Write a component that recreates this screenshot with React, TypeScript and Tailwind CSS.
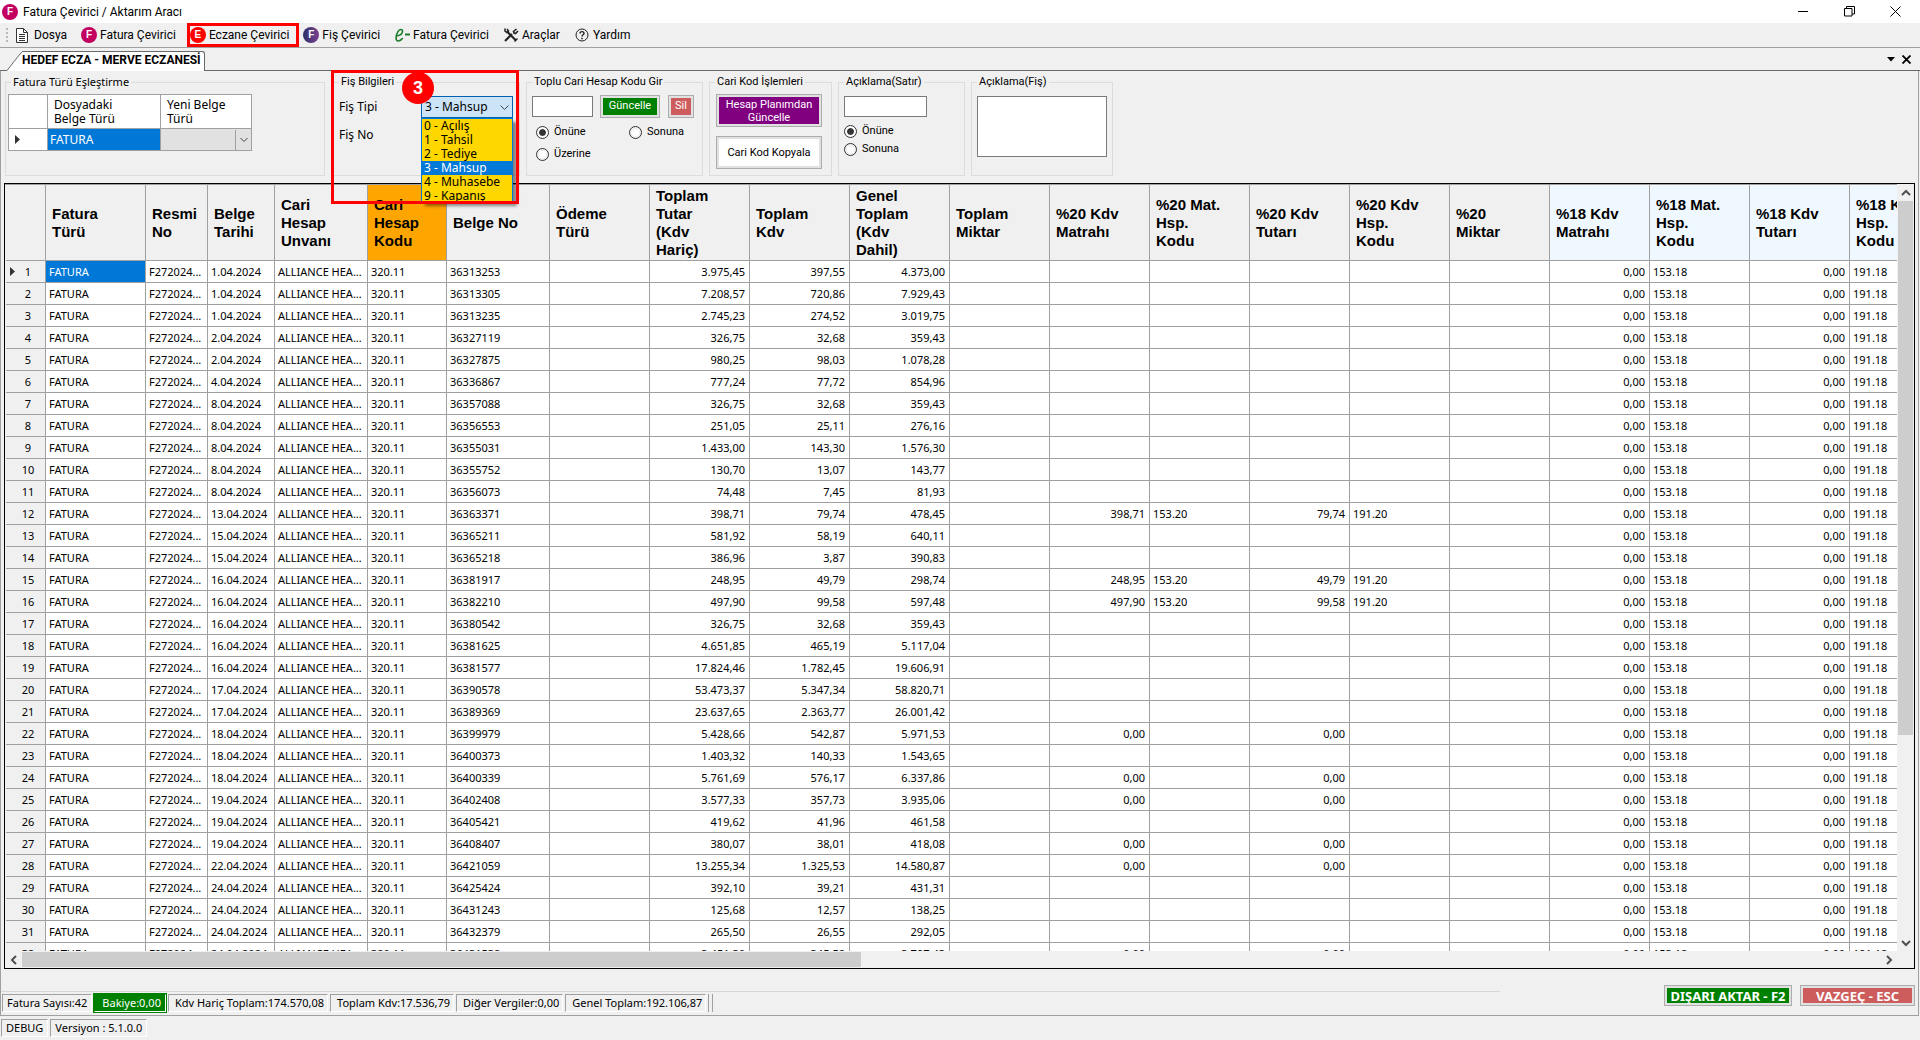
import { useState } from 'react';
import type { ReactNode } from 'react';
import { clsx } from 'clsx';

type Column = {
  lines: string[];
  width: string;
  align?: 'right';
  tone?: 'orange' | 'blue';
};

const columns: Column[] = [
  { lines: ['Fatura', 'Türü'], width: 'w-[100px]' },
  { lines: ['Resmi', 'No'], width: 'w-[62px]' },
  { lines: ['Belge', 'Tarihi'], width: 'w-[67px]' },
  { lines: ['Cari', 'Hesap', 'Unvanı'], width: 'w-[93px]' },
  { lines: ['Cari', 'Hesap', 'Kodu'], width: 'w-[79px]', tone: 'orange' },
  { lines: ['Belge No'], width: 'w-[103px]' },
  { lines: ['Ödeme', 'Türü'], width: 'w-[100px]' },
  { lines: ['Toplam', 'Tutar', '(Kdv', 'Hariç)'], width: 'w-[100px]', align: 'right' },
  { lines: ['Toplam', 'Kdv'], width: 'w-[100px]', align: 'right' },
  { lines: ['Genel', 'Toplam', '(Kdv', 'Dahil)'], width: 'w-[100px]', align: 'right' },
  { lines: ['Toplam', 'Miktar'], width: 'w-[100px]', align: 'right' },
  { lines: ['%20 Kdv', 'Matrahı'], width: 'w-[100px]', align: 'right' },
  { lines: ['%20 Mat.', 'Hsp.', 'Kodu'], width: 'w-[100px]' },
  { lines: ['%20 Kdv', 'Tutarı'], width: 'w-[100px]', align: 'right' },
  { lines: ['%20 Kdv', 'Hsp.', 'Kodu'], width: 'w-[100px]' },
  { lines: ['%20', 'Miktar'], width: 'w-[100px]', align: 'right' },
  { lines: ['%18 Kdv', 'Matrahı'], width: 'w-[100px]', align: 'right', tone: 'blue' },
  { lines: ['%18 Mat.', 'Hsp.', 'Kodu'], width: 'w-[100px]', tone: 'blue' },
  { lines: ['%18 Kdv', 'Tutarı'], width: 'w-[100px]', align: 'right', tone: 'blue' },
  { lines: ['%18 Kdv', 'Hsp.', 'Kodu'], width: 'w-[100px]', tone: 'blue' },
];

// date, document no, net total, vat total, grand total, %20 base, %20 vat
const invoices: string[][] = [
  ['1.04.2024', '36313253', '3.975,45', '397,55', '4.373,00'],
  ['1.04.2024', '36313305', '7.208,57', '720,86', '7.929,43'],
  ['1.04.2024', '36313235', '2.745,23', '274,52', '3.019,75'],
  ['2.04.2024', '36327119', '326,75', '32,68', '359,43'],
  ['2.04.2024', '36327875', '980,25', '98,03', '1.078,28'],
  ['4.04.2024', '36336867', '777,24', '77,72', '854,96'],
  ['8.04.2024', '36357088', '326,75', '32,68', '359,43'],
  ['8.04.2024', '36356553', '251,05', '25,11', '276,16'],
  ['8.04.2024', '36355031', '1.433,00', '143,30', '1.576,30'],
  ['8.04.2024', '36355752', '130,70', '13,07', '143,77'],
  ['8.04.2024', '36356073', '74,48', '7,45', '81,93'],
  ['13.04.2024', '36363371', '398,71', '79,74', '478,45', '398,71', '79,74'],
  ['15.04.2024', '36365211', '581,92', '58,19', '640,11'],
  ['15.04.2024', '36365218', '386,96', '3,87', '390,83'],
  ['16.04.2024', '36381917', '248,95', '49,79', '298,74', '248,95', '49,79'],
  ['16.04.2024', '36382210', '497,90', '99,58', '597,48', '497,90', '99,58'],
  ['16.04.2024', '36380542', '326,75', '32,68', '359,43'],
  ['16.04.2024', '36381625', '4.651,85', '465,19', '5.117,04'],
  ['16.04.2024', '36381577', '17.824,46', '1.782,45', '19.606,91'],
  ['17.04.2024', '36390578', '53.473,37', '5.347,34', '58.820,71'],
  ['17.04.2024', '36389369', '23.637,65', '2.363,77', '26.001,42'],
  ['18.04.2024', '36399979', '5.428,66', '542,87', '5.971,53', '0,00', '0,00'],
  ['18.04.2024', '36400373', '1.403,32', '140,33', '1.543,65'],
  ['18.04.2024', '36400339', '5.761,69', '576,17', '6.337,86', '0,00', '0,00'],
  ['19.04.2024', '36402408', '3.577,33', '357,73', '3.935,06', '0,00', '0,00'],
  ['19.04.2024', '36405421', '419,62', '41,96', '461,58'],
  ['19.04.2024', '36408407', '380,07', '38,01', '418,08', '0,00', '0,00'],
  ['22.04.2024', '36421059', '13.255,34', '1.325,53', '14.580,87', '0,00', '0,00'],
  ['24.04.2024', '36425424', '392,10', '39,21', '431,31'],
  ['24.04.2024', '36431243', '125,68', '12,57', '138,25'],
  ['24.04.2024', '36432379', '265,50', '26,55', '292,05'],
  ['24.04.2024', '36431538', '3.451,30', '345,52', '3.797,43', '0,00', '0,00'],
];

function toCells([date, no, net, vat, total, base20 = '', vat20 = '']: string[]) {
  const has20 = base20 !== '' && base20 !== '0,00';
  return [
    'FATURA', 'F272024...', date, 'ALLIANCE HEA...', '320.11', no, '',
    net, vat, total, '',
    base20, has20 ? '153.20' : '', vat20, has20 ? '191.20' : '', '',
    '0,00', '153.18', '0,00', '191.18',
  ];
}

const receiptTypes = ['0 - Açılış', '1 - Tahsil', '2 - Tediye', '3 - Mahsup', '4 - Muhasebe', '9 - Kapanış'];

function LetterIcon({ letter, color }: { letter: string; color: string }) {
  return (
    <span
      className={clsx(
        'flex size-4 shrink-0 items-center justify-center rounded-full font-["Liberation_Sans",sans-serif] text-[10px] font-bold leading-none text-white',
        color
      )}
    >
      {letter}
    </span>
  );
}

function FileIcon() {
  return (
    <svg className="size-4 shrink-0" viewBox="0 0 16 16" fill="none" stroke="#333">
      <path d="M1.500 1.500h7l4 4v10h-11z" fill="#fff" />
      <path d="M8.500 1.500v4h4M4 7.500h6M4 9.500h6M4 11.500h6M4 13.500h6" />
    </svg>
  );
}

function EInvoiceIcon() {
  return (
    <svg className="size-4 shrink-0" viewBox="0 0 16 16" fill="none" stroke="#1c7c2c" strokeWidth="1.600" strokeLinecap="round">
      <path d="M2.500 9C6 8.500 8.500 6.500 8.500 4.300 8.500 1.800 5.500 1.800 3.800 4.800 1.500 9 1.300 14 4.300 14c1.500 0 3-1 4-2.500" />
      <path d="M11 7.500h5" strokeWidth="2" strokeLinecap="butt" />
    </svg>
  );
}

function ToolsIcon() {
  return (
    <svg className="size-4 shrink-0" viewBox="0 0 16 16" fill="none" stroke="#222">
      <path d="M4.500 5l8.500 8.500" strokeWidth="2.200" />
      <path d="M2 1.500v2.500l2 1.500 1.500-1.500L4 2" strokeWidth="1.500" />
      <path d="M2 14l7-7" strokeWidth="2.200" />
      <path d="M13.500 2l-3 2.500.5 1.500 1.500.5 2.500-2.500" strokeWidth="1.600" />
      <path d="M11.500 14.500l3-3" strokeWidth="1.500" />
    </svg>
  );
}

function HelpIcon() {
  return (
    <svg className="size-4 shrink-0" viewBox="0 0 16 16" fill="none" stroke="#222">
      <circle cx="8" cy="8" r="6" />
      <path d="M6 6.500c0-2.500 4-2.500 4 0 0 1.300-2 1.300-2 3" strokeWidth="1.400" />
      <path d="M8 10.700v1.500" strokeWidth="1.500" />
    </svg>
  );
}

function MenuItem({ icon, children }: { icon: ReactNode; children: ReactNode }) {
  return (
    <button type="button" className="flex items-center gap-[3px]">
      {icon}
      {children}
    </button>
  );
}

function Group({ title, className, children }: { title: string; className: string; children: ReactNode }) {
  return (
    <fieldset className={clsx('h-[102px] shrink-0 border border-[#dcdcdc]', className)}>
      <legend className="ml-[5px] px-[2px] leading-4">{title}</legend>
      {children}
    </fieldset>
  );
}

function PushButton({ className, children }: { className: string; children: ReactNode }) {
  return (
    <button type="button" className="flex border border-[#adadad] bg-[#e1e1e1] p-[2px]">
      <span className={clsx('flex flex-1 items-center justify-center self-stretch text-center', className)}>{children}</span>
    </button>
  );
}

function RadioOption({ name, label, defaultChecked }: { name: string; label: string; defaultChecked?: boolean }) {
  return (
    <label className="flex items-center gap-[5px] leading-4">
      <input
        type="radio"
        name={name}
        defaultChecked={defaultChecked}
        className="size-[13px] appearance-none rounded-full border border-[#333] bg-white bg-clip-content p-[2px] checked:bg-[#333] checked:shadow-[inset_0_0_0_2px_#fff]"
      />
      {label}
    </label>
  );
}

function StatusItem({ children, className }: { children: ReactNode; className: string }) {
  return (
    <span className={clsx('border border-r-white border-b-white leading-4', className)}>
      {children}
    </span>
  );
}

function Chevron({ path }: { path: string }) {
  return (
    <svg className="size-[10px]" viewBox="0 0 10 10" fill="none" stroke="#505050" strokeWidth="2">
      <path d={path} />
    </svg>
  );
}

function MatchTable() {
  return (
    <table className="ml-[2px] mt-1 w-[244px] table-fixed border-collapse border border-[#a0a0a0] bg-white text-[12px] leading-[14px]">
      <thead>
        <tr className="h-[34px] text-left">
          <th aria-label="Seçim" className="w-[39px] border border-[#a0a0a0]" />
          <th className="w-[113px] border border-[#a0a0a0] pl-[6px] font-normal">Dosyadaki<br />Belge Türü</th>
          <th className="border border-[#a0a0a0] pl-[6px] font-normal">Yeni Belge<br />Türü</th>
        </tr>
      </thead>
      <tbody>
        <tr className="h-[22px]">
          <td className="border border-[#a0a0a0] pl-[6px]">
            <svg className="h-[9px] w-[5px]" viewBox="0 0 5 9"><path d="M0 0l5 4.500-5 4.500z" fill="#333" /></svg>
          </td>
          <td className="border border-[#a0a0a0] bg-[#0078d7] pl-[2px] text-white">FATURA</td>
          <td className="border border-[#a0a0a0] bg-[#e1e1e1] p-0">
            <div className="relative">
              <select aria-label="Yeni Belge Türü" className="block h-5 w-full appearance-none bg-transparent">
                <option></option>
              </select>
              <span className="pointer-events-none absolute inset-y-0 right-0 flex w-4 items-center justify-center border-l border-[#a0a0a0]">
                <svg className="size-2" viewBox="0 0 8 8" fill="none" stroke="#444"><path d="M.5 2L4 5.500 7.500 2" /></svg>
              </span>
            </div>
          </td>
        </tr>
      </tbody>
    </table>
  );
}

function ReceiptTypeSelect() {
  const [type, setType] = useState('3 - Mahsup');

  return (
    <div className="relative w-[92px]">
      <select
        id="receipt-type"
        value={type}
        onChange={(e) => setType(e.target.value)}
        className="block h-[22px] w-full appearance-none border border-[#0063b1] bg-[#cce4f7] pl-[3px] text-[12px]"
      >
        {receiptTypes.map((t) => <option key={t}>{t}</option>)}
      </select>
      <svg className="pointer-events-none absolute right-1 top-[7px] size-[9px]" viewBox="0 0 9 9" fill="none" stroke="#444">
        <path d="M.5 2.500l4 4 4-4" />
      </svg>
      {/* Open list */}
      <ul role="listbox" aria-label="Fiş Tipi" className="absolute left-0 top-[22px] z-20 h-[84px] w-full overflow-hidden border border-b-0 border-[#0078d7] bg-[#ffd700] text-[12px] leading-[14px] shadow-[4px_4px_3px_rgba(0,0,0,0.45)]">
        {receiptTypes.map((t) => (
          <li
            key={t}
            role="option"
            aria-selected={t === type}
            onClick={() => setType(t)}
            className={clsx('pl-[2px]', t === type && 'bg-[#0078d7] text-white')}
          >
            {t}
          </li>
        ))}
      </ul>
    </div>
  );
}

function InvoiceGrid() {
  return (
    <div className="mx-[3px] mt-[7px] grid min-h-0 flex-1 grid-cols-[minmax(0,1fr)_17px] grid-rows-[minmax(0,1fr)_17px] border border-black">
      <div className="overflow-hidden border-t border-[#a0a0a0] bg-[#f0f0f0] pl-px">
        <table className="w-[1944px] table-fixed border-separate border-spacing-0 bg-white text-[11px]">
          <thead>
            <tr className="h-[76px] text-left font-['Liberation_Sans',sans-serif] text-[15px] leading-[18px]">
              <th aria-label="Sıra" className="w-[40px] border-b border-r border-[#a0a0a0] bg-[#f0f0f0]" />
              {columns.map((col, i) => (
                <th
                  key={i}
                  className={clsx(
                    'border-b border-r border-[#a0a0a0] pl-[6px] font-bold',
                    col.width,
                    col.tone === 'orange' && 'bg-[#ffa500]',
                    col.tone === 'blue' && 'bg-[#f0f8ff]',
                    !col.tone && 'bg-[#f0f0f0]'
                  )}
                >
                  {col.lines.map((line) => <span key={line} className="block whitespace-nowrap">{line}</span>)}
                </th>
              ))}
            </tr>
          </thead>
          <tbody>
            {invoices.map((invoice, r) => (
              <tr key={r} className="h-[22px] leading-4">
                <th className="border-b border-r border-[#a0a0a0] bg-[#f0f0f0] font-normal">
                  <span className="flex items-center pl-1">
                    <span className="w-[5px]">
                      {r === 0 && <svg className="h-[9px] w-[5px]" viewBox="0 0 5 9"><path d="M0 0l5 4.500-5 4.500z" fill="#333" /></svg>}
                    </span>
                    <span className="w-[26px] text-center">{r + 1}</span>
                  </span>
                </th>
                {toCells(invoice).map((cell, c) => (
                  <td
                    key={c}
                    className={clsx(
                      'whitespace-nowrap border-b border-r border-[#a0a0a0]',
                      columns[c].align === 'right' ? 'pr-1 text-right' : 'pl-[3px]',
                      r === 0 && c === 0 && 'bg-[#0078d7] text-white'
                    )}
                  >
                    {cell}
                  </td>
                ))}
              </tr>
            ))}
          </tbody>
        </table>
      </div>

      {/* Vertical scrollbar */}
      <div className="flex flex-col items-center bg-[#f0f0f0]">
        <span className="flex h-[17px] items-center"><Chevron path="M1 7l4-4 4 4" /></span>
        <span className="h-[534px] w-[15px] bg-[#cdcdcd]" />
        <span className="mt-auto flex h-[17px] items-center"><Chevron path="M1 3l4 4 4-4" /></span>
      </div>

      {/* Horizontal scrollbar */}
      <div className="flex items-center bg-[#f0f0f0]">
        <span className="flex w-[17px] justify-center"><Chevron path="M7 1L3 5l4 4" /></span>
        <span className="h-[15px] w-[839px] bg-[#cdcdcd]" />
        <span className="ml-auto flex w-[17px] justify-center"><Chevron path="M3 1l4 4-4 4" /></span>
      </div>
      <div className="bg-[#f0f0f0]" />
    </div>
  );
}

export default function App() {
  return (
    <div className="relative flex h-screen flex-col overflow-hidden bg-[#f0f0f0] font-['Noto_Sans',sans-serif] text-[11px] text-black">
      {/* Title bar */}
      <header className="flex h-[23px] shrink-0 items-center bg-white pl-[2px] font-['Roboto',sans-serif] text-[12px]">
        <LetterIcon letter="F" color="bg-[#c2005f]" />
        <h1 className="ml-[5px]">Fatura Çevirici / Aktarım Aracı</h1>
        <div className="ml-auto flex items-center gap-[35px] pr-[19px]">
          <button type="button" aria-label="Simge durumuna küçült">
            <svg className="size-[11px]" viewBox="0 0 11 11" stroke="#000"><path d="M0 5.500h10" /></svg>
          </button>
          <button type="button" aria-label="Önceki boyut">
            <svg className="size-[11px]" viewBox="0 0 11 11" fill="none" stroke="#000"><path d="M.5 2.500h7.500v7.500H.5zM2.500 2.500v-2h8v7.500h-2.500" /></svg>
          </button>
          <button type="button" aria-label="Kapat">
            <svg className="size-[11px]" viewBox="0 0 11 11" stroke="#000"><path d="M.5 .5l10 10M10.500 .5l-10 10" /></svg>
          </button>
        </div>
      </header>

      {/* Menu */}
      <nav className="flex h-6 shrink-0 items-center gap-[14px] pl-[6px] font-['Roboto',sans-serif] text-[12px]">
        <div className="flex items-center gap-[7px]">
          <span className="h-[14px] border-l-2 border-dotted border-[#b8b8b8]" />
          <MenuItem icon={<FileIcon />}>Dosya</MenuItem>
        </div>
        <MenuItem icon={<LetterIcon letter="F" color="bg-[#c2005f]" />}>Fatura Çevirici</MenuItem>
        <div className="-ml-[3px] flex h-6 items-center border-[3px] border-[#fe0000] pr-[7px]">
          <MenuItem icon={<LetterIcon letter="E" color="bg-[#fe0000]" />}>Eczane Çevirici</MenuItem>
        </div>
        <div className="-ml-[10px]">
          <MenuItem icon={<LetterIcon letter="F" color="bg-linear-to-r from-[#2b2f66] to-[#7d3f92]" />}>Fiş Çevirici</MenuItem>
        </div>
        <MenuItem icon={<EInvoiceIcon />}>Fatura Çevirici</MenuItem>
        <MenuItem icon={<ToolsIcon />}>Araçlar</MenuItem>
        <MenuItem icon={<HelpIcon />}>Yardım</MenuItem>
      </nav>

      {/* Document tabs */}
      <div className="flex h-6 shrink-0 items-end border-b border-t border-b-[#696969] border-t-[#a0a0a0] pl-[7px]">
        <div className="-mb-px flex h-5">
          <svg className="h-5 w-[18px]" viewBox="0 0 18 20"><path d="M0 19.500L13 3Q15 .5 18 .5V20H0z" fill="#fff" /><path d="M0 19.500L13 3Q15 .5 18 .5" fill="none" stroke="#696969" /></svg>
          <button type="button" className="-ml-[3px] rounded-tr-[3px] border-r border-t border-[#696969] bg-white pb-[3px] pr-[3px] font-['Roboto',sans-serif] text-[12px] font-bold leading-4">
            HEDEF ECZA - MERVE ECZANESİ
          </button>
        </div>
        <div className="ml-auto flex items-center gap-[7px] self-center pr-[9px]">
          <button type="button" aria-label="Sekmeler">
            <svg className="h-[5px] w-2" viewBox="0 0 8 5"><path d="M0 0h8L4 4.500z" /></svg>
          </button>
          <button type="button" aria-label="Sekmeyi kapat">
            <svg className="size-[9px]" viewBox="0 0 9 9" stroke="#000" strokeWidth="1.800"><path d="M.5 .5l8 8M8.500 .5l-8 8" /></svg>
          </button>
        </div>
      </div>

      <main className="mr-px flex min-h-0 flex-1 flex-col border-x border-b border-[#a0a0a0]">
        {/* Option groups */}
        <div className="flex shrink-0 gap-[6px] pl-1 pt-[3px] font-['Roboto',sans-serif]">
          <Group title="Fatura Türü Eşleştirme" className="mr-[2px] w-[320px] font-['Noto_Sans',sans-serif]">
            <MatchTable />
          </Group>

          <Group title="Fiş Bilgileri" className="w-[187px]">
            <div className="mt-[6px] flex items-center justify-between pl-[5px] pr-[6px] font-['Noto_Sans',sans-serif] text-[12px]">
              <label htmlFor="receipt-type">Fiş Tipi</label>
              <ReceiptTypeSelect />
            </div>
            <p className="mt-[9px] pl-[5px] font-['Noto_Sans',sans-serif] text-[12px] leading-4">Fiş No</p>
          </Group>

          <Group title="Toplu Cari Hesap Kodu Gir" className="w-[177px]">
            <div className="mt-[5px] flex items-center pl-[5px]">
              <input type="text" aria-label="Cari Hesap Kodu" className="h-[21px] w-[61px] border border-[#7a7a7a] bg-white px-1" />
              <div className="ml-[7px] flex h-[23px] w-[60px] *:flex-1">
                <PushButton className="bg-[#008000] text-white">Güncelle</PushButton>
              </div>
              <div className="ml-2 flex h-[23px] w-[26px] *:flex-1">
                <PushButton className="bg-[#cd5c5c] text-white">Sil</PushButton>
              </div>
            </div>
            <div className="mt-[6px] grid grid-cols-[93px_1fr] gap-y-[6px] pl-[9px]">
              <RadioOption name="bulk-code" label="Önüne" defaultChecked />
              <RadioOption name="bulk-code" label="Sonuna" />
              <RadioOption name="bulk-code" label="Üzerine" />
            </div>
          </Group>

          <Group title="Cari Kod İşlemleri" className="w-[123px]">
            <div className="ml-[6px] mt-1 flex w-[106px] flex-col gap-[9px] leading-[13px] *:h-[33px]">
              <PushButton className="bg-[#800080] text-white">Hesap Planımdan<br />Güncelle</PushButton>
              <PushButton className="bg-white">Cari Kod Kopyala</PushButton>
            </div>
          </Group>

          <Group title="Açıklama(Satır)" className="w-[127px]">
            <div className="flex flex-col items-start gap-[2px] pl-[5px] pt-[6px]">
              <input type="text" aria-label="Açıklama (Satır)" className="mb-1 h-[21px] w-[83px] border border-[#7a7a7a] bg-white px-1" />
              <RadioOption name="row-note" label="Önüne" defaultChecked />
              <RadioOption name="row-note" label="Sonuna" />
            </div>
          </Group>

          <Group title="Açıklama(Fiş)" className="w-[142px]">
            <textarea aria-label="Açıklama (Fiş)" className="ml-[5px] mt-[6px] block h-[61px] w-[130px] resize-none border border-[#7a7a7a] bg-white p-1" />
          </Group>
        </div>

        <InvoiceGrid />

        {/* Totals and actions */}
        <footer className="flex h-[46px] shrink-0 justify-between">
          <div className="mt-[22px] flex w-[1499px] items-start gap-[2px] border-t border-[#d7d7d7] pl-px pt-[2px]">
            <StatusItem className="border-[#a0a0a0] px-1">Fatura Sayısı:42</StatusItem>
            <StatusItem className="border-[#008000] bg-[#008000] pl-[7px] pr-1 text-white outline outline-[#008000]">Bakiye:0,00</StatusItem>
            <StatusItem className="border-[#a0a0a0] pl-[6px] pr-[3px]">Kdv Hariç Toplam:174.570,08</StatusItem>
            <StatusItem className="border-[#a0a0a0] pl-[6px] pr-[3px]">Toplam Kdv:17.536,79</StatusItem>
            <StatusItem className="border-[#a0a0a0] pl-[6px] pr-[3px]">Diğer Vergiler:0,00</StatusItem>
            <StatusItem className="border-[#a0a0a0] pl-[6px] pr-[3px]">Genel Toplam:192.106,87</StatusItem>
            <span className="h-[18px] w-[5px] border-x border-[#a0a0a0]" />
          </div>
          <div className="mr-[3px] mt-4 flex gap-2 text-[13px] font-bold leading-4">
            <div className="flex h-[21px] w-[128px] *:flex-1">
              <PushButton className="bg-[#008000] text-white">DIŞARI AKTAR - F2</PushButton>
            </div>
            <div className="flex h-[21px] w-[115px] *:flex-1">
              <PushButton className="bg-[#cd5c5c] text-white">VAZGEÇ - ESC</PushButton>
            </div>
          </div>
        </footer>
      </main>

      <div className="flex h-6 shrink-0 items-center gap-[2px] pl-px">
        <StatusItem className="border-[#a0a0a0] px-1">DEBUG</StatusItem>
        <StatusItem className="border-[#a0a0a0] px-1">Versiyon : 5.1.0.0</StatusItem>
      </div>

      {/* Step callout over the receipt group */}
      <div className="pointer-events-none absolute left-[331px] top-[70px] z-30 h-[134px] w-[188px] border-[3px] border-[#fe0000]">
        <span className="absolute left-[68px] top-[-1px] flex size-8 items-center justify-center rounded-full bg-[#fe0000] font-['Liberation_Sans',sans-serif] text-[18px] font-bold text-white">
          3
        </span>
      </div>
    </div>
  );
}
